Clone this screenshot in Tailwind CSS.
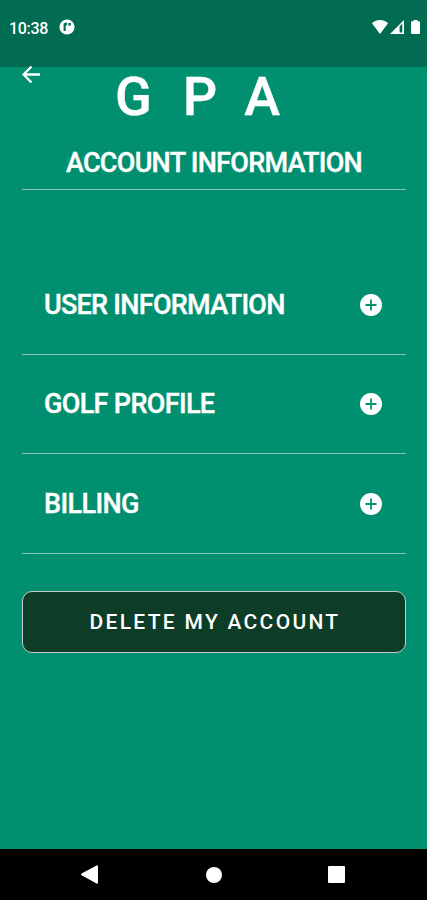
<!DOCTYPE html>
<html lang="en">
<head>
    <meta charset="UTF-8">
    <meta name="viewport" content="width=device-width, initial-scale=1.0">
    <title>Account Information</title>
    <script src="https://cdn.jsdelivr.net/npm/@tailwindcss/browser@4"></script>
</head>
<body class="bg-[#01906f] font-['Roboto',sans-serif] text-white">
<div class="flex flex-col w-[427px] h-[900px] overflow-hidden">
    <!-- Status Bar -->
    <div class="flex items-start h-[67px] pt-[18px] pl-[9px] pr-[7px] bg-[#016c51]">
        <span class="mt-px text-base leading-5 font-medium tracking-[-0.3px]">10:38</span>
        <svg class="w-4 h-4 ml-[11px] mt-px" viewBox="0 0 16 16">
            <circle cx="8" cy="8" r="7.6" fill="#fff"/>
            <path d="M4.600 12V5.300Q4.600 3.800 6.200 3.800h2v2.400H7.300Q6.700 6.200 6.700 7v5z" fill="#016c51"/>
            <path d="M9.500 3.900h2.400v1.600q0 1.300-1.300 1.300H9.500z" fill="#016c51"/>
        </svg>
        <div class="flex items-center ml-auto mt-[2px]">
            <svg class="w-4 h-[14px]" viewBox="0 0 16 14" fill="#fff">
                <path d="M0 3.300C4.600-1 11.400-1 16 3.300L8 14z"/>
            </svg>
            <svg class="w-[14px] h-[14px] ml-[2px]" viewBox="0 0 14 14">
                <path d="M0 14L14 0v14z" fill="#fff"/>
                <path d="M9.600 6.200L12.300 3.800v8.600H9.600z" fill="#016c51"/>
            </svg>
            <svg class="w-[9px] h-[14px] ml-[7px]" viewBox="0 0 9 14" fill="#fff">
                <path d="M2.500 1.200V0h4v1.200H8a1 1 0 0 1 1 1V13a1 1 0 0 1-1 1H1a1 1 0 0 1-1-1V2.200a1 1 0 0 1 1-1z"/>
            </svg>
        </div>
    </div>

    <!-- Page Content -->
    <main class="flex-1 pl-[22px] pr-[21px]">
        <header class="h-[123px] border-b border-[#8cc5b5]">
            <div class="flex items-start h-[77px]">
                <button type="button" aria-label="Back" class="w-[18px] mt-[-2px]">
                    <svg class="w-[18px] h-[18px]" viewBox="0 0 18 18" fill="none" stroke="#fff" stroke-width="2.300">
                        <path d="M18 9.500H1.800M9.500 1.500L1.600 9.500l7.900 8"/>
                    </svg>
                </button>
                <h1 class="ml-[75px] text-[54px] leading-[60px] font-medium tracking-[31px] [-webkit-text-stroke:0.4px_white]">GPA</h1>
            </div>
            <h2 class="pt-[3px] text-center text-[27px] leading-8 font-medium tracking-[-0.720px] [-webkit-text-stroke:0.4px_white]">ACCOUNT INFORMATION</h2>
        </header>

        <!-- Sections -->
        <ul class="mt-[65px]">
            <li class="flex items-center justify-between h-[100px] pl-[22px] pr-6 border-b border-[#8cc5b5]">
                <span class="text-[27px] leading-8 font-medium tracking-[-0.720px] [-webkit-text-stroke:0.4px_white]">USER INFORMATION</span>
                <svg class="w-[22px] h-[22px]" viewBox="0 0 22 22">
                    <circle cx="11" cy="11" r="11" fill="#fff"/>
                    <path d="M11 5.500v11M5.500 11h11" stroke="#01906f" stroke-width="1.800"/>
                </svg>
            </li>
            <li class="flex items-center justify-between h-[99px] pl-[22px] pr-6 border-b border-[#8cc5b5]">
                <span class="text-[27px] leading-8 font-medium tracking-[-0.660px] [-webkit-text-stroke:0.4px_white]">GOLF PROFILE</span>
                <svg class="w-[22px] h-[22px]" viewBox="0 0 22 22">
                    <circle cx="11" cy="11" r="11" fill="#fff"/>
                    <path d="M11 5.500v11M5.500 11h11" stroke="#01906f" stroke-width="1.800"/>
                </svg>
            </li>
            <li class="flex items-center justify-between h-[100px] pl-[22px] pr-6 border-b border-[#8cc5b5]">
                <span class="text-[27px] leading-8 font-medium tracking-[-0.600px] [-webkit-text-stroke:0.4px_white]">BILLING</span>
                <svg class="w-[22px] h-[22px]" viewBox="0 0 22 22">
                    <circle cx="11" cy="11" r="11" fill="#fff"/>
                    <path d="M11 5.500v11M5.500 11h11" stroke="#01906f" stroke-width="1.800"/>
                </svg>
            </li>
        </ul>

        <button type="button" class="w-full h-[62px] mt-[37px] rounded-[10px] border-[1.500px] border-[#c5cdc6] bg-[#0d3c27] pt-[2px] pl-[2px] text-[21px] font-medium tracking-[2.300px]">DELETE MY ACCOUNT</button>
    </main>

    <!-- Navigation Bar -->
    <nav class="flex items-center h-[51px] pl-[81px] pr-[82px] bg-black">
        <svg class="w-[17px] h-[19px]" viewBox="0 0 17 19" fill="#fff">
            <path d="M.6 8.600L15.500.4Q17 0 17 1.500v16q0 1.500-1.500 1.100L.6 10.300Q-.3 9.500.6 8.600z"/>
        </svg>
        <span class="w-4 h-4 ml-[108px] rounded-full bg-white"></span>
        <span class="w-[17px] h-[17px] ml-auto rounded-[1px] bg-white"></span>
    </nav>
</div>
</body>
</html>
